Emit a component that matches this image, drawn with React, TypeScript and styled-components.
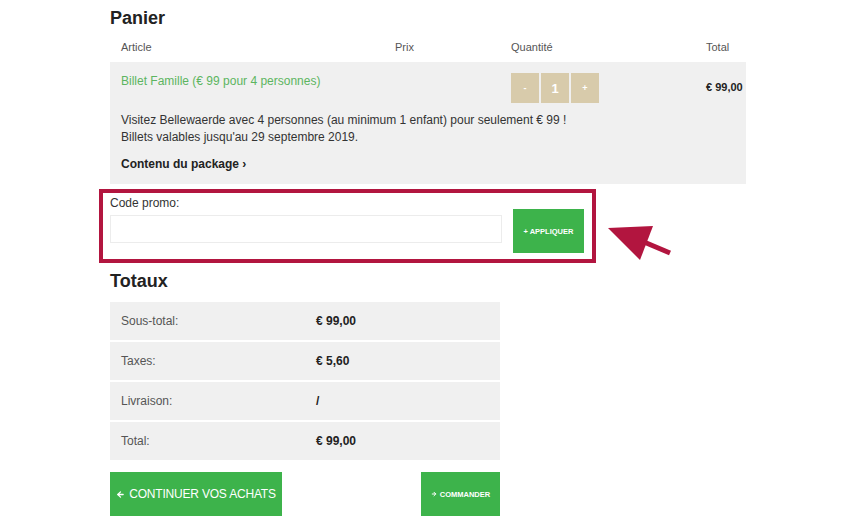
import React from "react";
import styled, { createGlobalStyle } from "styled-components";
import { ArrowLeft, ArrowRight } from "lucide-react";

const Global = createGlobalStyle`
  html, body { margin: 0; padding: 0; background: #fff; }
  body { font-family: "Liberation Sans", Arial, Helvetica, sans-serif; color: #333; }
  * { box-sizing: border-box; }
`;

const GREEN = "#3db34b";
const GRAY = "#f0f0f0";
const TAN = "#d8cbab";
const RED = "#b2153f";

const Page = styled.div`
  width: 636px;
  margin-left: 110px;
  display: flex;
  flex-direction: column;
`;

const Heading = styled.h2<{ $top: number }>`
  margin: ${(p) => p.$top}px 0 0;
  font-size: 18px;
  line-height: 22px;
  font-weight: bold;
  color: #222;
`;

const Cols = styled.div`
  display: grid;
  grid-template-columns: 274px 116px 195px 1fr;
`;

const HeaderRow = styled(Cols)`
  height: 33px;
  align-items: center;
  padding-top: 3px;
  font-size: 11px;
  color: #555;
  & > span { padding-left: 11px; }
`;

const ItemBlock = styled.div`
  background: ${GRAY};
  height: 122px;
  padding: 12px 0 0;
  display: flex;
  flex-direction: column;
`;

const ItemRow = styled(Cols)`
  align-items: start;
`;

const ItemName = styled.div`
  padding-left: 11px;
  font-size: 12px;
  line-height: 14px;
  color: #5cb560;
`;

const QtyCell = styled.div`
  margin-top: -1px;
  padding-left: 11px;
  display: flex;
  gap: 2px;
`;

const QtyBtn = styled.div<{ $bold?: boolean }>`
  width: 28px;
  height: 30px;
  background: ${TAN};
  color: #fff;
  display: flex;
  align-items: center;
  justify-content: center;
  font-size: ${(p) => (p.$bold ? "13px" : "9px")};
  font-weight: bold;
`;

const Price = styled.div`
  padding-left: 11px;
  padding-top: 7px;
  font-size: 11px;
  font-weight: bold;
  color: #222;
  white-space: nowrap;
`;

const Desc = styled.div`
  margin-top: 9px;
  padding-left: 11px;
  font-size: 12px;
  line-height: 17px;
  color: #333;
`;

const PackageLink = styled.div`
  margin-top: 10px;
  padding-left: 11px;
  font-size: 12px;
  line-height: 17px;
  font-weight: bold;
  color: #222;
`;

const PromoBox = styled.div`
  position: relative;
  margin: 5px 0 0 -11px;
  width: 497px;
  height: 74px;
  border: 4px solid ${RED};
  padding: 3px 7px 6px 7px;
  display: flex;
  align-items: flex-start;
  gap: 11px;
`;

const PromoField = styled.div`
  width: 392px;
  display: flex;
  flex-direction: column;
`;

const PromoLabel = styled.label`
  font-size: 12px;
  line-height: 14px;
  color: #333;
`;

const PromoInput = styled.input`
  margin-top: 5px;
  height: 28px;
  width: 100%;
  border: 1px solid #ececec;
  background: #fff;
  outline: none;
`;

const GreenButton = styled.button<{ $w: number; $big?: boolean }>`
  width: ${(p) => p.$w}px;
  height: 44px;
  background: ${GREEN};
  border: none;
  color: #fff;
  font-family: inherit;
  font-size: ${(p) => (p.$big ? "12px" : "7.5px")};
  font-weight: ${(p) => (p.$big ? "normal" : "bold")};
  letter-spacing: ${(p) => (p.$big ? "-0.2px" : "0")};
  display: flex;
  align-items: center;
  justify-content: center;
  gap: ${(p) => (p.$big ? "4px" : "3px")};
  padding: 0;
  white-space: nowrap;
  flex-shrink: 0;
`;

const ApplyButton = styled(GreenButton)`
  margin-top: 13px;
`;

const Arrow = styled.svg`
  position: absolute;
  left: 497px;
  top: 22px;
  overflow: visible;
`;

const TotalsTable = styled.div`
  margin-top: 10px;
  width: 390px;
  display: flex;
  flex-direction: column;
  gap: 2px;
`;

const TotalRow = styled.div`
  display: grid;
  grid-template-columns: 195px 1fr;
  align-items: center;
  height: 38px;
  background: ${GRAY};
  padding-left: 11px;
`;

const TotalLabel = styled.span`
  font-size: 12px;
  color: #555;
`;

const TotalValue = styled.span`
  font-size: 12px;
  font-weight: bold;
  color: #222;
`;

const Actions = styled.div`
  margin-top: 12px;
  width: 390px;
  display: flex;
  justify-content: space-between;
`;

const totals: [string, string][] = [
  ["Sous-total:", "€ 99,00"],
  ["Taxes:", "€ 5,60"],
  ["Livraison:", "/"],
  ["Total:", "€ 99,00"],
];

export default function App() {
  return (
    <>
      <Global />
      <Page>
        <Heading $top={7}>Panier</Heading>
        <HeaderRow>
          <span>Article</span>
          <span>Prix</span>
          <span>Quantité</span>
          <span>Total</span>
        </HeaderRow>
        <ItemBlock>
          <ItemRow>
            <ItemName>Billet Famille (€ 99 pour 4 personnes)</ItemName>
            <div />
            <QtyCell>
              <QtyBtn>-</QtyBtn>
              <QtyBtn $bold>1</QtyBtn>
              <QtyBtn>+</QtyBtn>
            </QtyCell>
            <Price>€ 99,00</Price>
          </ItemRow>
          <Desc>
            Visitez Bellewaerde avec 4 personnes (au minimum 1 enfant) pour seulement € 99 !
            <br />
            Billets valables jusqu'au 29 septembre 2019.
          </Desc>
          <PackageLink>Contenu du package ›</PackageLink>
        </ItemBlock>
        <PromoBox>
          <PromoField>
            <PromoLabel>Code promo:</PromoLabel>
            <PromoInput />
          </PromoField>
          <ApplyButton $w={71}>+ APPLIQUER</ApplyButton>
          <Arrow width="80" height="50" viewBox="0 0 80 50">
            <polygon points="8,13 53,11 40,45" fill={RED} />
            <line x1="44" y1="27" x2="70" y2="38" stroke={RED} strokeWidth="5" />
          </Arrow>
        </PromoBox>
        <Heading $top={7}>Totaux</Heading>
        <TotalsTable>
          {totals.map(([l, v]) => (
            <TotalRow key={l}>
              <TotalLabel>{l}</TotalLabel>
              <TotalValue>{v}</TotalValue>
            </TotalRow>
          ))}
        </TotalsTable>
        <Actions>
          <GreenButton $w={172} $big>
            <ArrowLeft size={9} strokeWidth={3.5} />
            CONTINUER VOS ACHATS
          </GreenButton>
          <GreenButton $w={79}>
            <ArrowRight size={6} strokeWidth={4} />
            COMMANDER
          </GreenButton>
        </Actions>
      </Page>
    </>
  );
}
